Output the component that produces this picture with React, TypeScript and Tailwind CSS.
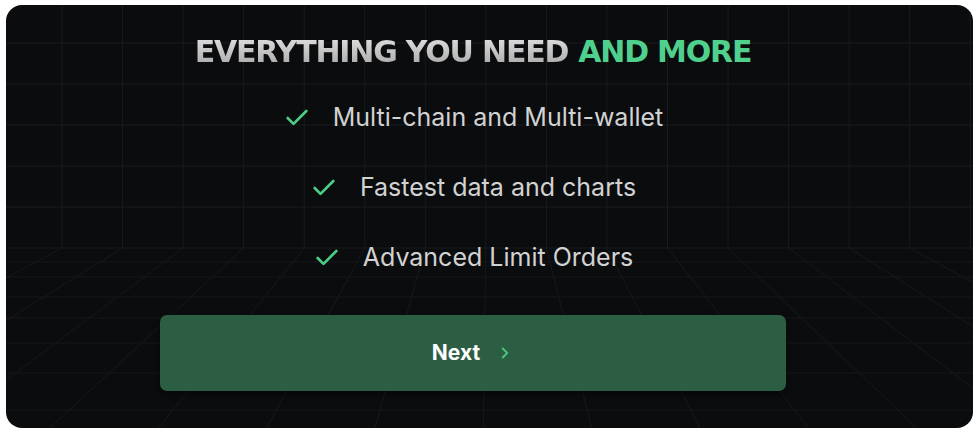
import React from 'react';
import { Check, ChevronRight } from 'lucide-react';

const W = 967;
const H = 423;
const HORIZON = 243;
const VX = 483;
const VY = 15;

const features = [
  'Multi-chain and Multi-wallet',
  'Fastest data and charts',
  'Advanced Limit Orders',
];

const GridBackdrop = () => {
  const cols = Array.from({ length: 16 }, (_, i) => 56 + i * 60.55);
  const rows = Array.from({ length: 6 }, (_, i) => 38 + i * 41);
  const floorRows = [257, 272, 292, 313, 338, 368, 405];

  return (
    <svg
      className="absolute inset-0 h-full w-full"
      viewBox={`0 0 ${W} ${H}`}
      preserveAspectRatio="none"
    >
      {cols.map((x) => (
        <line key={`v${x}`} x1={x} y1={0} x2={x} y2={HORIZON} stroke="#191b1e" strokeWidth={1} />
      ))}
      {rows.map((y) => (
        <line key={`h${y}`} x1={0} y1={y} x2={W} y2={y} stroke="#191b1e" strokeWidth={1} />
      ))}
      {floorRows.map((y) => (
        <line key={`f${y}`} x1={0} y1={y} x2={W} y2={y} stroke="#15171a" strokeWidth={1} />
      ))}
      {cols.map((x) => {
        // extend each column down the floor, away from the vanishing point
        const dx = x - VX;
        const dy = HORIZON - VY;
        const t = (H - VY) / dy;
        return (
          <line
            key={`d${x}`}
            x1={x}
            y1={HORIZON}
            x2={VX + dx * t}
            y2={H}
            stroke="#17191c"
            strokeWidth={1}
          />
        );
      })}
    </svg>
  );
};

const App = () => {
  return (
    <div className="h-[437px] w-[980px] bg-white pl-[6px] pt-[5px]">
      <div className="relative h-[423px] w-[967px] overflow-hidden rounded-[16px] bg-[#0b0c0e]">
        <GridBackdrop />
        <div className="relative flex flex-col items-center pl-[10px] pr-[43px] pt-[26px]">
          <h1
            className="flex h-[40px] items-center gap-[10px] text-[30px] font-bold tracking-[-0.04em] uppercase"
            style={{ fontFamily: '"DejaVu Sans", sans-serif' }}
          >
            <span className="bg-linear-to-b from-[#eeeeee] to-[#9c9c9c] bg-clip-text text-transparent">
              Everything you need
            </span>
            <span className="text-[#4fd18d]">And more</span>
          </h1>

          <ul className="mt-[12px] flex flex-col">
            {features.map((f) => (
              <li key={f} className="flex h-[70px] items-center justify-center gap-[22px]">
                <Check size={28} strokeWidth={2.3} className="text-[#4ccd86]" />
                <span
                  className="text-[25px] text-[#d2d2d2]"
                  style={{ fontFamily: 'Inter, sans-serif' }}
                >
                  {f}
                </span>
              </li>
            ))}
          </ul>

          <button
            className="mt-[22px] flex h-[76px] w-[626px] items-center justify-center gap-[16px] rounded-[7px] bg-[#2c5e43] shadow-[0_3px_6px_rgba(0,0,0,0.5)]"
            style={{ fontFamily: 'Inter, sans-serif' }}
          >
            <span className="text-[21px] font-bold text-white">Next</span>
            <ChevronRight size={18} strokeWidth={2.5} className="text-[#4cc47d]" />
          </button>
        </div>
      </div>
    </div>
  );
};

export default App;
